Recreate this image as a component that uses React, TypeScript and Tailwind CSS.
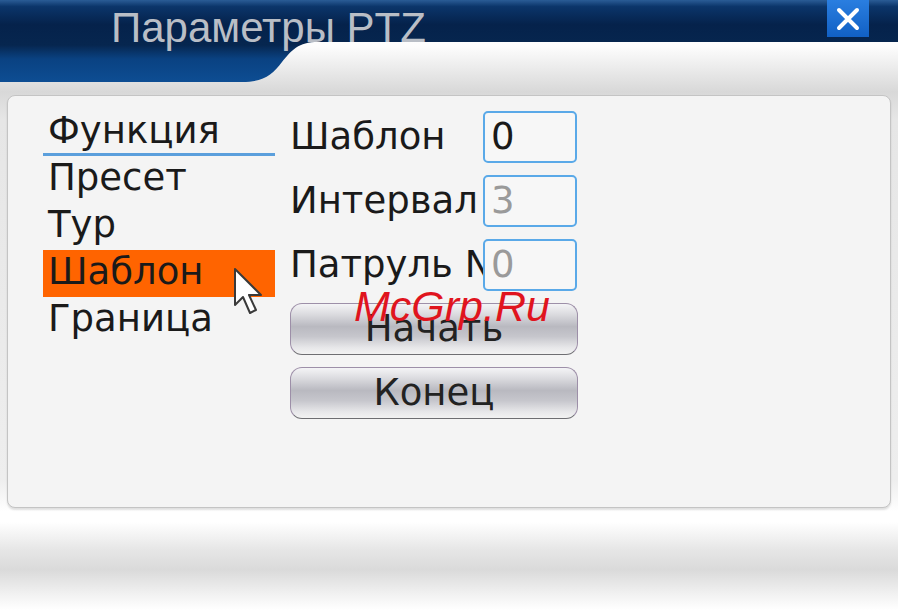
import React from 'react';

const menuItems = ['Функция', 'Пресет', 'Тур', 'Шаблон', 'Граница'];

const fields = [
  { label: 'Шаблон', value: '0', muted: false },
  { label: 'Интервал', value: '3', muted: true },
  { label: 'Патруль N', value: '0', muted: true },
];

const HeaderBackdrop: React.FC = () => (
  <svg
    className="absolute inset-0"
    width="898"
    height="95"
    viewBox="0 0 898 95"
    preserveAspectRatio="none"
  >
    <defs>
      <linearGradient id="hdr" x1="0" y1="0" x2="0" y2="82" gradientUnits="userSpaceOnUse">
        <stop offset="0" stopColor="#2a5c96" />
        <stop offset="0.08" stopColor="#0b356a" />
        <stop offset="0.3" stopColor="#05224b" />
        <stop offset="0.55" stopColor="#06264f" />
        <stop offset="0.72" stopColor="#0a4282" />
        <stop offset="1" stopColor="#0d4d93" />
      </linearGradient>
    </defs>
    <path
      d="M0 0 H898 V42 H318 C298 42 292 50 282 62 C272 75 264 82 242 82 H0 Z"
      fill="url(#hdr)"
    />
  </svg>
);

const Cursor: React.FC = () => (
  <svg
    className="absolute left-[233px] top-[267px]"
    width="34"
    height="52"
    viewBox="0 0 34 52"
  >
    <path
      d="M2 2 L2 38 L10 30 L17 46 L23 43 L16 28 L28 28 Z"
      fill="#ffffff"
      stroke="#3a3a3a"
      strokeWidth="2"
      strokeLinejoin="round"
    />
  </svg>
);

const App: React.FC = () => {
  return (
    <div className="relative w-[898px] h-[610px] overflow-hidden bg-[linear-gradient(to_bottom,#ffffff_0px,#fdfdfd_46px,#d8d8d8_92px,#e6e6e6_120px,#eeeeee_480px,#ffffff_512px,#ffffff_522px,#e6e6e6_550px,#dadada_570px,#f2f2f2_595px,#ffffff_610px)] font-['DejaVu_Sans',sans-serif]">
      <div className="relative h-[95px]">
        <HeaderBackdrop />
        <div className="relative flex items-start justify-between">
          <div className="pl-[111px] pt-[4px] text-[42px] leading-[48px] text-[#b9bec6] font-['Liberation_Sans',Arial,sans-serif]">
            Параметры PTZ
          </div>
          <div className="mr-[29px] flex h-[37px] w-[42px] items-center justify-center bg-[linear-gradient(to_bottom,#2a7ee0,#1160c4)]">
            <svg width="24" height="24" viewBox="0 0 24 24">
              <path d="M3 3 L21 21 M21 3 L3 21" stroke="#ffffff" strokeWidth="4" strokeLinecap="round" />
            </svg>
          </div>
        </div>
      </div>

      <div className="mx-[7px] h-[413px] rounded-[8px] border border-[#c4c4c4] bg-[#f4f4f4] shadow-[0_2px_2px_rgba(0,0,0,0.12)] flex pl-[35px] text-[37px] text-[#1a1a1a]">
        <div className="w-[232px] pt-[13px] flex flex-col">
          {menuItems.map((item, i) => (
            <div
              key={item}
              className={`h-[47px] pl-[5px] leading-[44px] ${
                i === 0 ? 'border-b-[3px] border-[#5b9fdc]' : ''
              } ${i === 3 ? 'bg-[#ff6400]' : ''}`}
            >
              {item}
            </div>
          ))}
        </div>

        <div className="ml-[15px] pt-[15px] flex flex-col gap-[12px] w-[288px]">
          {fields.map((f) => (
            <div key={f.label} className="flex h-[52px] items-center">
              <div className="w-[193px] overflow-hidden whitespace-nowrap leading-[52px]">
                {f.label}
              </div>
              <div
                className={`h-[52px] w-[94px] rounded-[5px] border-2 border-[#5aa9e8] bg-[#f7f7f7] pl-[6px] leading-[48px] ${
                  f.muted ? 'text-[#9a9a9a]' : 'text-[#1a1a1a]'
                }`}
              >
                {f.value}
              </div>
            </div>
          ))}
          {['Начать', 'Конец'].map((b) => (
            <div
              key={b}
              className="h-[52px] rounded-[12px] border-[1.5px] border-[#9d8fa8] border-b-[#6e6e72] bg-[linear-gradient(to_bottom,#f4f4f6_0%,#dcdce0_20%,#b9b9c0_45%,#c6c6cc_65%,#e8e8ea_88%,#f2f2f2_100%)] flex items-center justify-center leading-[48px] text-[#222]"
            >
              {b}
            </div>
          ))}
        </div>
      </div>

      <Cursor />

      <div className="absolute left-[354px] top-[282px] text-[43px] leading-[48px] italic text-[#e0141e] font-['Liberation_Sans',Arial,sans-serif]">
        McGrp.Ru
      </div>
    </div>
  );
};

export default App;
